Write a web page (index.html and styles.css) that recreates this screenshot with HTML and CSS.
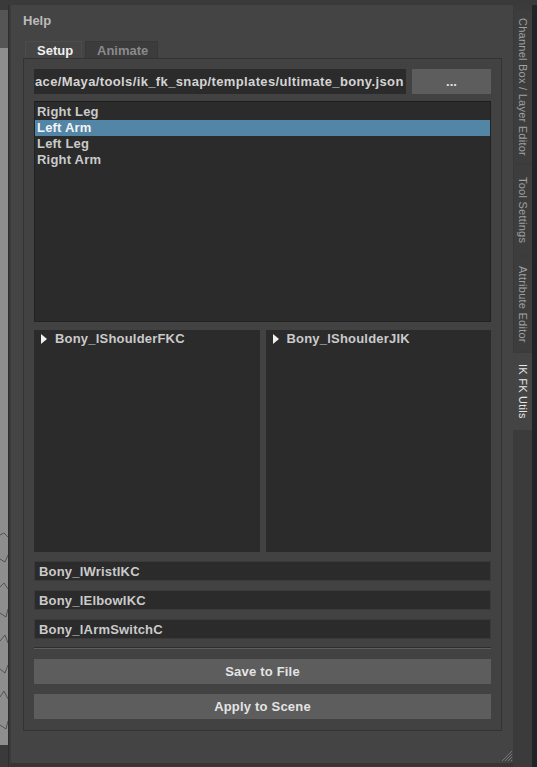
FILE: index.html
```html
<!DOCTYPE html>
<html lang="en">
<head>
  <meta charset="UTF-8" />
  <title>IK FK Utils</title>
  <link rel="stylesheet" href="styles.css">
</head>
<body>
  <div class="app">
    <div class="viewport-edge">
      <div class="edge-top"></div>
      <div class="edge-view">
        <svg class="curves" width="8" height="210" viewBox="0 0 8 210">
          <path d="M0 6 L4 4 L8 8" />
          <path d="M0 30 L5 33 L8 26" />
          <path d="M0 58 L4 54 L8 60" />
          <path d="M0 84 L6 88 L8 80" />
          <path d="M0 112 L5 106 L8 114" />
          <path d="M0 140 L5 144 L8 136" />
          <path d="M0 168 L4 162 L8 170" />
          <path d="M0 196 L6 200 L8 192" />
        </svg>
      </div>
    </div>
    <div class="spacer"></div>

    <div class="panel">
      <div class="menubar"><span class="menu">Help</span></div>

      <div class="tabs">
        <div class="tab active">Setup</div>
        <div class="tab">Animate</div>
      </div>

      <div class="tab-pane">
        <div class="path-row">
          <div class="field path">ace/Maya/tools/ik_fk_snap/templates/ultimate_bony.json</div>
          <button class="btn browse">...</button>
        </div>

        <div class="list">
          <div class="item">Right Leg</div>
          <div class="item selected">Left Arm</div>
          <div class="item">Left Leg</div>
          <div class="item">Right Arm</div>
        </div>

        <div class="trees">
          <div class="tree">
            <div class="node"><span class="arrow"></span>Bony_lShoulderFKC</div>
          </div>
          <div class="tree">
            <div class="node"><span class="arrow"></span>Bony_lShoulderJIK</div>
          </div>
        </div>

        <div class="field ctrl">Bony_lWristIKC</div>
        <div class="field ctrl">Bony_lElbowIKC</div>
        <div class="field ctrl">Bony_lArmSwitchC</div>

        <div class="separator"></div>

        <button class="btn action">Save to File</button>
        <button class="btn action">Apply to Scene</button>
      </div>

      <div class="footer">
        <svg class="grip" width="12" height="12" viewBox="0 0 12 12">
          <path d="M11 1 L1 11 M11 4 L4 11 M11 7 L7 11 M11 10 L10 11" />
        </svg>
      </div>
    </div>

    <div class="side-tabs">
      <div class="side-tab channel"><span>Channel Box / Layer Editor</span></div>
      <div class="side-tab tools"><span>Tool Settings</span></div>
      <div class="side-tab attr"><span>Attribute Editor</span></div>
      <div class="side-tab current"><span>IK FK Utils</span></div>
    </div>
    <div class="dark-edge"></div>
  </div>
</body>
</html>
```

FILE: styles.css
```css
body {
  margin: 0;
  background: #444;
  font-family: 'Liberation Sans', Arial, sans-serif;
  font-size: 13px;
  font-weight: bold;
  color: #cacaca;
  overflow: hidden;
}

.app {
  display: flex;
  width: 537px;
  height: 767px;
  border-top: 5px solid #3a3a3a;
  box-sizing: border-box;
}

.viewport-edge {
  width: 8px;
  flex-shrink: 0;
  padding-top: 5px;
  display: flex;
  flex-direction: column;
  border-right: 1px solid #2e2e2e;
  background: #3a3a3a;
}

.edge-top {
  height: 38px;
  background: #555;
}

.edge-view {
  height: 697px;
  background: #8e8e8e;
  display: flex;
  flex-direction: column;
  justify-content: flex-end;
  padding-bottom: 6px;
  box-sizing: border-box;
}

.curves path {
  fill: none;
  stroke: #444;
  stroke-width: 0.8;
}

.spacer {
  width: 2px;
  flex-shrink: 0;
  background: #3a3a3a;
}

.panel {
  width: 502px;
  flex-shrink: 0;
  background: #444;
  display: flex;
  flex-direction: column;
  padding: 0 11px 0 12px;
  box-sizing: border-box;
  border-bottom: 4px solid #363636;
}

.menubar {
  height: 36px;
  display: flex;
  align-items: center;
}

.menu {
  color: #bbb;
  margin-top: -6px;
}

.tabs {
  display: flex;
  gap: 3px;
  padding-left: 2px;
  height: 17px;
}

.tab {
  padding: 0 11px;
  line-height: 18px;
  background: #3c3c3c;
  color: #8a8a8a;
  border: 1px solid #383838;
  border-bottom: none;
  width: 49px;
  text-align: center;
  box-sizing: content-box;
}

.tab.active {
  background: #454545;
  color: #f0f0f0;
  width: 33px;
  border-color: #4c4c4c;
}

.tab-pane {
  border: 1px solid #333;
  background: #424242;
  padding: 10px 10px 11px 10px;
  display: flex;
  flex-direction: column;
}

.path-row {
  display: flex;
  gap: 6px;
  height: 25px;
}

.field {
  background: #2b2b2b;
  color: #cacaca;
  white-space: nowrap;
  overflow: hidden;
}

.path {
  flex: 1;
  line-height: 25px;
  padding-left: 1px;
  color: #d4d4d4;
  letter-spacing: 0.37px;
}

.btn {
  border: none;
  background: #5d5d5d;
  color: #e4e4e4;
  font-family: inherit;
  font-size: 13px;
  font-weight: bold;
  padding: 0;
}

.browse {
  width: 79px;
}

.list {
  margin-top: 7px;
  height: 221px;
  background: #2b2b2b;
  border: 1px solid #222;
  border-top-color: #1c1c1c;
  box-sizing: border-box;
  padding-top: 2px;
}

.item {
  height: 16px;
  line-height: 16px;
  padding-left: 2px;
  letter-spacing: 0.2px;
}

.item.selected {
  background: #5285a6;
  color: #f4f4f4;
}

.trees {
  display: flex;
  gap: 6px;
  margin-top: 8px;
  height: 222px;
}

.tree {
  flex: 1;
  background: #2b2b2b;
  padding-top: 1px;
}

.node {
  height: 16px;
  line-height: 16px;
  display: flex;
  align-items: center;
  letter-spacing: 0.2px;
}

.arrow {
  width: 0;
  height: 0;
  border-top: 5px solid transparent;
  border-bottom: 5px solid transparent;
  border-left: 6px solid #f0f0f0;
  margin: 0 8px 0 7px;
}

.ctrl {
  height: 20px;
  line-height: 20px;
  margin-top: 9px;
  padding-left: 4px;
  border: 1px solid #3a3a3a;
  box-sizing: border-box;
  letter-spacing: 0.2px;
}

.separator {
  margin-top: 8px;
  height: 1px;
  border-top: 1px solid #2e2e2e;
  background: #5e5e5e;
}

.action {
  height: 25px;
  margin-top: 10px;
  letter-spacing: 0.2px;
}

.footer {
  flex: 1;
  display: flex;
  justify-content: flex-end;
  align-items: flex-end;
  padding-bottom: 1px;
  margin-right: -11px;
}

.grip path {
  stroke: #777;
  stroke-width: 1;
}

.side-tabs {
  width: 19px;
  flex-shrink: 0;
  display: flex;
  flex-direction: column;
  gap: 2px;
  padding-top: 5px;
  background: #3b3b3b;
  font-family: 'Liberation Sans', Arial, sans-serif;
  font-weight: normal;
  font-size: 11px;
  letter-spacing: 0.25px;
}

.side-tab {
  background: #3d3d3d;
  border-left: 1px solid #383838;
  color: #a0a0a0;
  display: flex;
  justify-content: center;
  align-items: center;
}

.side-tab span {
  writing-mode: vertical-rl;
}

.channel { height: 153px; }
.tools { height: 90px; }
.attr { height: 94px; }

.current {
  height: 77px;
  background: #444;
  color: #e6e6e6;
  border-left: none;
}

.dark-edge {
  width: 5px;
  flex-shrink: 0;
  background: #1f2427;
}
```
